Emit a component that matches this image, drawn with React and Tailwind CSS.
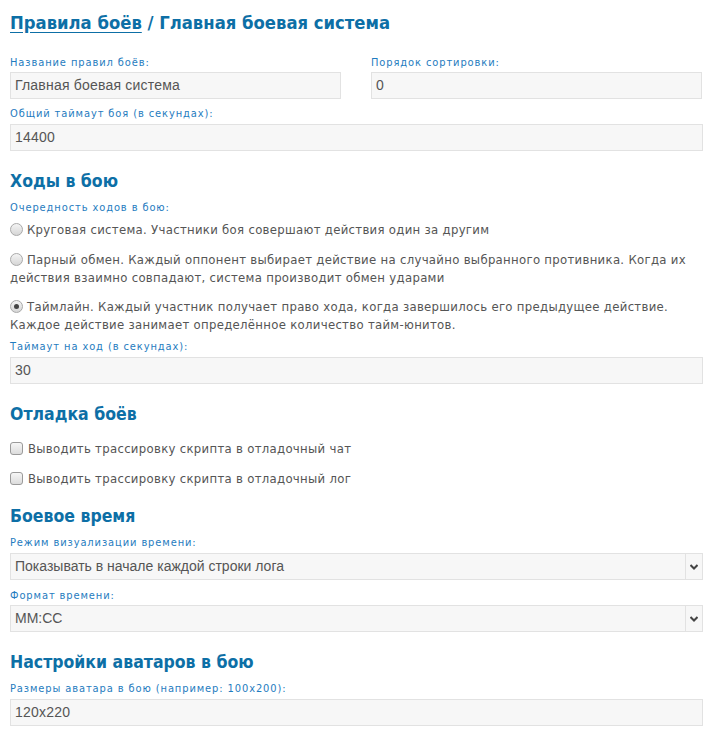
import React from "react";

const H = "[font-family:'DejaVu_Sans_Condensed','DejaVu_Sans',sans-serif]";

function Label({ children, className = "" }) {
  return (
    <div
      className={`text-[11px] leading-[14px] tracking-[0.9px] text-[#1f7cc0] [font-family:'DejaVu_Sans_Condensed','DejaVu_Sans',sans-serif] ${className}`}
    >
      {children}
    </div>
  );
}

function Field({ value, className = "" }) {
  return (
    <div
      className={`h-[27px] border border-[#e2e2e2] bg-[#f7f7f7] pl-[4px] flex items-center text-[14px] tracking-[0.2px] text-[#555] [font-family:'Liberation_Sans',Arial,sans-serif] ${className}`}
    >
      {value}
    </div>
  );
}

function Select({ value, className = "" }) {
  return (
    <div
      className={`h-[27px] border border-[#e2e2e2] bg-[#f7f7f7] flex items-stretch text-[14px] text-[#555] [font-family:'Liberation_Sans',Arial,sans-serif] ${className}`}
    >
      <div className="flex-1 pl-[4px] flex items-center">{value}</div>
      <div className="w-[17px] border-l border-[#e2e2e2] flex items-center justify-center">
        <svg width="8" height="6" viewBox="0 0 8 6">
          <path d="M0.5 1 L4 4.5 L7.5 1" fill="none" stroke="#444" strokeWidth="2" />
        </svg>
      </div>
    </div>
  );
}

function Radio({ checked }) {
  return (
    <span className="inline-block relative top-[2px] w-[13px] h-[13px] rounded-full border border-[#a9a9a9] bg-gradient-to-b from-[#f4f4f4] to-[#d6d6d6] mr-[4px] align-baseline">
      {checked && (
        <span className="absolute left-[3px] top-[3px] w-[5px] h-[5px] rounded-full bg-[#444]" />
      )}
    </span>
  );
}

function Check() {
  return (
    <span className="inline-block relative top-[2px] w-[13px] h-[13px] rounded-[3px] border border-[#9a9a9a] bg-gradient-to-b from-[#f6f6f6] to-[#dcdcdc] mr-[5px]" />
  );
}

function H2({ children, className = "" }) {
  return (
    <h2
      className={`text-[17.5px] leading-[24px] font-bold text-[#0d6fa6] ${H} ${className}`}
    >
      {children}
    </h2>
  );
}

export default function App() {
  const body = `text-[13px] leading-[18px] text-[#555] tracking-[0.3px] ${H}`;
  return (
    <div className="bg-white w-[727px] h-[738px] overflow-hidden">
      <div className="pl-[10px] w-[703px] flex flex-col">
        <h1 className={`mt-[9px] text-[18.3px] leading-[28px] font-bold text-[#0d6fa6] ${H}`}>
          <span className="underline underline-offset-[3px]">Правила боёв</span> / Главная боевая система
        </h1>

        <div className="mt-[19px] flex gap-[30px]">
          <div className="w-[331px]">
            <Label>Название правил боёв:</Label>
            <Field className="mt-[2px]" value="Главная боевая система" />
          </div>
          <div className="w-[331px]">
            <Label>Порядок сортировки:</Label>
            <Field className="mt-[2px]" value="0" />
          </div>
        </div>

        <Label className="mt-[8px]">Общий таймаут боя (в секундах):</Label>
        <Field className="mt-[3px]" value="14400" />

        <H2 className="mt-[18px]">Ходы в бою</H2>
        <Label className="mt-[8px]">Очередность ходов в бою:</Label>
        <div className={`mt-[6px] ${body}`}>
          <Radio />Круговая система. Участники боя совершают действия один за другим
        </div>
        <div className={`mt-[12px] ${body}`}>
          <Radio />Парный обмен. Каждый оппонент выбирает действие на случайно выбранного противника. Когда их действия взаимно совпадают, система производит обмен ударами
        </div>
        <div className={`mt-[11px] ${body}`}>
          <Radio checked />Таймлайн. Каждый участник получает право хода, когда завершилось его предыдущее действие. Каждое действие занимает определённое количество тайм-юнитов.
        </div>
        <Label className="mt-[6px]">Таймаут на ход (в секундах):</Label>
        <Field className="mt-[3px]" value="30" />

        <H2 className="mt-[18px]">Отладка боёв</H2>
        <div className={`mt-[14px] ${body}`}>
          <Check />Выводить трассировку скрипта в отладочный чат
        </div>
        <div className={`mt-[12px] ${body}`}>
          <Check />Выводить трассировку скрипта в отладочный лог
        </div>

        <H2 className="mt-[16px]">Боевое время</H2>
        <Label className="mt-[8px]">Режим визуализации времени:</Label>
        <Select className="mt-[3px]" value="Показывать в начале каждой строки лога" />
        <Label className="mt-[9px]">Формат времени:</Label>
        <Select className="mt-[2px]" value="ММ:СС" />

        <H2 className="mt-[18px]">Настройки аватаров в бою</H2>
        <Label className="mt-[8px]">Размеры аватара в бою (например: 100x200):</Label>
        <Field className="mt-[3px]" value="120x220" />
      </div>
    </div>
  );
}
